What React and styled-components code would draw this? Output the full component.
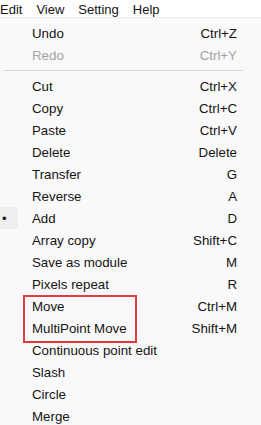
import React from "react";
import styled, { createGlobalStyle } from "styled-components";

const GlobalStyle = createGlobalStyle`
  html, body {
    margin: 0;
    padding: 0;
    background: #f9f9f9;
  }
  body {
    font-family: "Liberation Sans", Arial, sans-serif;
    font-size: 13.3px;
    color: #141414;
  }
`;

const topMenus = ["Edit", "View", "Setting", "Help"];

const items = [
  { label: "Undo", key: "Ctrl+Z" },
  { label: "Redo", key: "Ctrl+Y", disabled: true },
  { sep: true },
  { label: "Cut", key: "Ctrl+X" },
  { label: "Copy", key: "Ctrl+C" },
  { label: "Paste", key: "Ctrl+V" },
  { label: "Delete", key: "Delete" },
  { label: "Transfer", key: "G" },
  { label: "Reverse", key: "A" },
  { label: "Add", key: "D", checked: true },
  { label: "Array copy", key: "Shift+C" },
  { label: "Save as module", key: "M" },
  { label: "Pixels repeat", key: "R" },
];

const marked = [
  { label: "Move", key: "Ctrl+M" },
  { label: "MultiPoint Move", key: "Shift+M" },
];

const rest = [
  { label: "Continuous point edit" },
  { label: "Slash" },
  { label: "Circle" },
  { label: "Merge" },
];

const Row = ({ item }) => (
  <Item $disabled={item.disabled}>
    <Check $on={item.checked}>{item.checked ? "•" : ""}</Check>
    <Label>{item.label}</Label>
    <Shortcut>{item.key}</Shortcut>
  </Item>
);

export default function App() {
  return (
    <>
      <GlobalStyle />
      <Page>
        <MenuBar>
          {topMenus.map((m) => (
            <TopItem key={m}>{m}</TopItem>
          ))}
        </MenuBar>
        <Menu>
          {items.map((it, i) =>
            it.sep ? <Separator key={i} /> : <Row key={i} item={it} />
          )}
          <Marked>
            {marked.map((it, i) => (
              <Row key={i} item={it} />
            ))}
          </Marked>
          {rest.map((it, i) => (
            <Row key={i} item={it} />
          ))}
        </Menu>
      </Page>
    </>
  );
}

const Page = styled.div`
  width: 261px;
  height: 425px;
  overflow: hidden;
  display: flex;
  flex-direction: column;
`;

const MenuBar = styled.div`
  display: flex;
  height: 19px;
  box-sizing: border-box;
  padding-top: 2px;
  align-items: center;
  background: #ffffff;
  border-bottom: 1px solid #ececec;
  margin-left: -7px;
`;

const TopItem = styled.div`
  padding: 0 7px;
  font-size: 13px;
  color: #141414;
`;

const Menu = styled.div`
  display: flex;
  flex-direction: column;
  padding-top: 4px;
  background: #f9f9f9;
`;

const Item = styled.div`
  display: grid;
  grid-template-columns: 32px 1fr auto;
  align-items: center;
  height: 22.05px;
  padding-right: 24px;
  color: ${(p) => (p.$disabled ? "#a3a3a3" : "#141414")};
`;

const Check = styled.span`
  width: 18px;
  height: 22px;
  display: flex;
  align-items: center;
  padding-left: 2px;
  font-size: 13px;
  background: ${(p) => (p.$on ? "#eeeeee" : "transparent")};
  box-sizing: border-box;
`;

const Label = styled.span`
  white-space: nowrap;
`;

const Shortcut = styled.span`
  text-align: right;
  white-space: nowrap;
`;

const Separator = styled.div`
  height: 1px;
  margin: 4px 18px 4px 3px;
  background: #d8d8d8;
`;

const Marked = styled.div`
  position: relative;
  &::after {
    content: "";
    position: absolute;
    left: 23px;
    top: -1px;
    width: 114px;
    height: 48px;
    border: 2px solid #e23a3f;
    box-sizing: border-box;
    pointer-events: none;
  }
`;
